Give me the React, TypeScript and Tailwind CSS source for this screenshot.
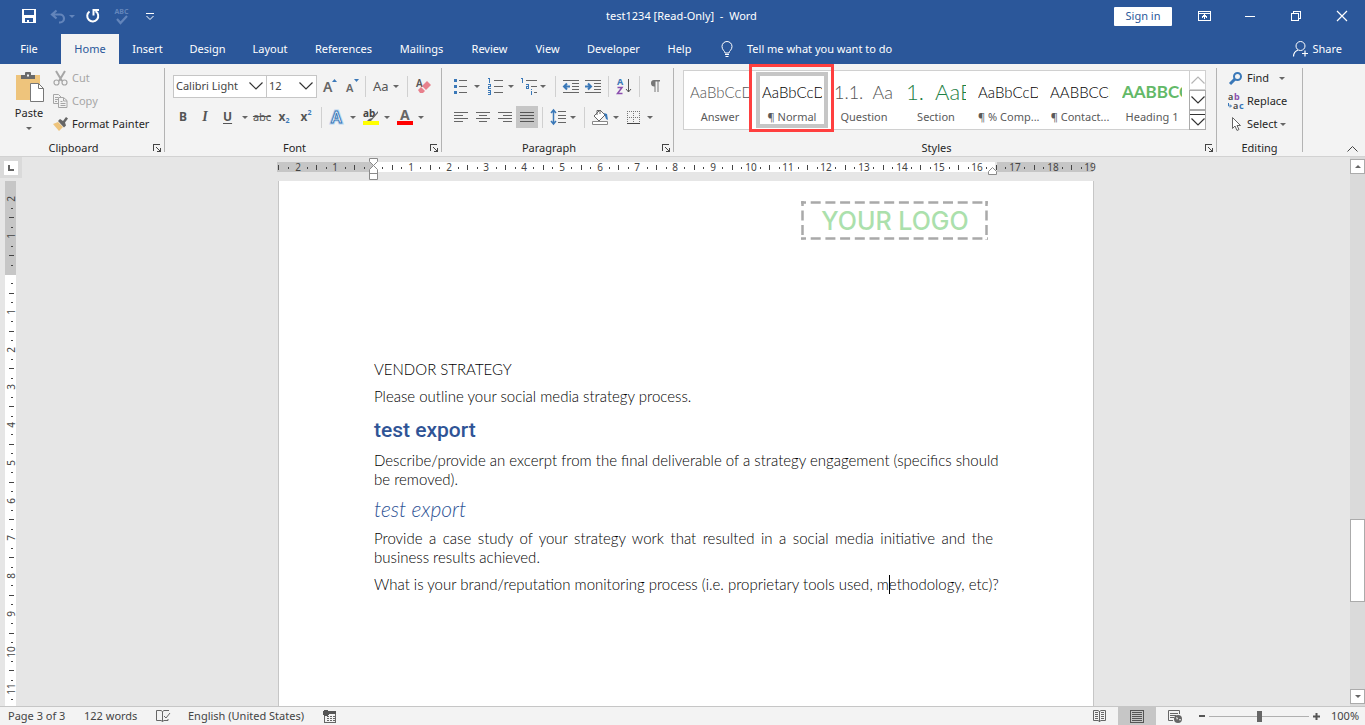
import React from 'react';

const TABS = [
    { label: 'File', width: 'w-[58px] mr-[3px]' },
    { label: 'Home', width: 'w-[58px]' },
    { label: 'Insert', width: 'w-[57px]' },
    { label: 'Design', width: 'w-[63px]' },
    { label: 'Layout', width: 'w-[62px]' },
    { label: 'References', width: 'w-[85px]' },
    { label: 'Mailings', width: 'w-[71px]' },
    { label: 'Review', width: 'w-[65px]' },
    { label: 'View', width: 'w-[51px]' },
    { label: 'Developer', width: 'w-[81px]' },
    { label: 'Help', width: 'w-[51px]' },
];

const STYLES = [
    { name: 'Answer', sample: 'AaBbCcD', look: 'font-light text-[15px] text-[#555]' },
    { name: '¶ Normal', sample: 'AaBbCcD', look: 'font-light text-[15px] text-black' },
    { name: 'Question', sample: '1.1.  Aa', look: 'font-light text-[18px] text-[#555]' },
    { name: 'Section', sample: '1.  AaB', look: 'font-light text-[22px] text-[#1d8044]' },
    { name: '¶ % Comp...', sample: 'AaBbCcD', look: 'font-light text-[15px] text-black' },
    { name: '¶ Contact...', sample: 'AABBCCD', look: 'font-light text-[15px] text-black' },
    { name: 'Heading 1', sample: 'AABBCC', look: 'font-bold text-[17px] text-[#63b968]' },
];

// one centimetre on the rulers, in pixels
const CM = 37.75;

interface IconProps {
    w: number;
    h: number;
    children: React.ReactNode;
    crisp?: boolean;
}

const Icon: React.FC<IconProps> = ({ w, h, children, crisp }) => (
    <svg
        width={w}
        height={h}
        viewBox={`0 0 ${w} ${h}`}
        fill="none"
        className="shrink-0 overflow-visible"
        shapeRendering={crisp ? 'crispEdges' : 'auto'}
        aria-hidden="true"
    >
        {children}
    </svg>
);

const Arrow: React.FC<{ color?: string }> = ({ color = '#666' }) => (
    <Icon w={6} h={3}>
        <path d="M0 0h6L3 3z" fill={color} />
    </Icon>
);

const Chevron: React.FC<{ color?: string }> = ({ color = '#333' }) => (
    <Icon w={14} h={8}>
        <path d="M.5.5 7 7l6.5-6.5" stroke={color} strokeWidth="1.2" />
    </Icon>
);

interface ToolProps {
    label: string;
    className: string;
    arrow?: boolean;
    children: React.ReactNode;
}

const Tool: React.FC<ToolProps> = ({ label, className, arrow, children }) => (
    <button
        aria-label={label}
        className={`flex h-[22px] shrink-0 items-center text-[#555] hover:bg-[#d5d5d5] ${arrow ? 'justify-between' : 'justify-center'} ${className}`}
    >
        {children}
        {arrow && <Arrow />}
    </button>
);

const Sep: React.FC<{ className: string }> = ({ className }) => (
    <div className={`h-[21px] w-px shrink-0 bg-[#d0d0d0] ${className}`} />
);

interface GroupProps {
    title: string;
    className: string;
    launcher?: boolean;
    children: React.ReactNode;
}

const Group: React.FC<GroupProps> = ({ title, className, launcher, children }) => (
    <section aria-label={title} className={`my-1 flex h-[84px] flex-col border-r border-[#b3b3b3] ${className}`}>
        <div className="min-h-0 flex-1">{children}</div>
        <div className="-mb-1 flex h-4 items-center">
            <span className={`flex-1 text-center text-[#262626] ${launcher ? 'pr-[6px]' : ''}`}>{title}</span>
            {launcher && (
                <button aria-label={`${title} settings`} className="mr-[3px] w-2">
                    <Icon w={8} h={8} crisp>
                        <path d="M.5 7V.5H7M3 3l4 4M7.5 3.500v4h-4" stroke="#444" />
                    </Icon>
                </button>
            )}
        </div>
    </section>
);

const TitleBar = () => (
    <header className="flex h-8 shrink-0 items-center bg-[#2b579a] text-white">
        <div className="flex flex-1 items-center pl-[22px]">
            <button aria-label="Save" className="mr-[15px]">
                <Icon w={14} h={14} crisp>
                    <path d="M0 0h14v14H0zM2 1v5h10V1zM3 9v4h2v-2h2v2h4V9z" fill="#fff" fillRule="evenodd" />
                </Icon>
            </button>
            <button aria-label="Undo" className="mr-[11px] flex items-center gap-[4px]">
                <Icon w={14} h={13}>
                    <path d="M5.500.5 1 4.500l4.500 4M1.500 4.500H9a4 4 0 0 1 0 8H8" stroke="#6385bb" strokeWidth="2.200" />
                </Icon>
                <Arrow color="#6385bb" />
            </button>
            <button aria-label="Repeat" className="mr-[15px]">
                <Icon w={13} h={14}>
                    <path d="M9.500 2.200A5.500 5.500 0 1 1 3.500 2.500" stroke="#fff" strokeWidth="2" />
                    <path d="M7.500 6.500V1H13" stroke="#fff" strokeWidth="2" />
                </Icon>
            </button>
            <button aria-label="Spelling" className="mr-[17px] flex w-[15px] flex-col items-center text-[7px] leading-[7px] font-bold text-[#6385bb]">
                ABC
                <Icon w={12} h={9}>
                    <path d="m1 4 3.500 4L11 1" stroke="#6385bb" strokeWidth="2.200" />
                </Icon>
            </button>
            <button aria-label="Customize toolbar">
                <Icon w={8} h={7}>
                    <path d="M0 .5h8M.5 3 4 6.500 7.500 3" stroke="#fff" />
                </Icon>
            </button>
        </div>
        <h1 className="mr-6 whitespace-pre">test1234 [Read-Only]  -  Word</h1>
        <div className="flex flex-1 items-center justify-end">
            <button className="mr-[9px] h-[19px] w-[58px] rounded-[1px] bg-white text-[#2b579a]">Sign in</button>
            <button aria-label="Ribbon display options" className="flex w-[46px] justify-center">
                <Icon w={13} h={10} crisp>
                    <path d="M.5.5h12v9H.5zM0 2.500h13M6.500 8V4M4 6.500 6.500 4 9 6.500" stroke="#fff" />
                </Icon>
            </button>
            <button aria-label="Minimize" className="flex w-[46px] justify-center">
                <Icon w={10} h={1} crisp>
                    <path d="M0 .5h10" stroke="#fff" />
                </Icon>
            </button>
            <button aria-label="Restore" className="flex w-[46px] justify-center">
                <Icon w={10} h={10} crisp>
                    <path d="M.5 2.500h7v7h-7zM2.500 2V.5h7v7H8" stroke="#fff" />
                </Icon>
            </button>
            <button aria-label="Close" className="flex w-[46px] justify-center">
                <Icon w={10} h={10}>
                    <path d="m0 0 10 10M10 0 0 10" stroke="#fff" strokeWidth="1.200" />
                </Icon>
            </button>
        </div>
    </header>
);

const TabBar = () => (
    <nav className="flex h-8 shrink-0 items-end bg-[#2b579a] text-white">
        {TABS.map(t => (
            <button
                key={t.label}
                className={`h-[30px] shrink-0 ${t.width} ${t.label === 'Home' ? 'bg-[#f3f3f3] text-[#2b579a]' : ''}`}
            >
                {t.label}
            </button>
        ))}
        <button className="ml-4 flex h-[30px] items-center gap-[14px] whitespace-nowrap">
            <Icon w={12} h={16}>
                <path d="M4 12c0-2-3-3-3-6.500a5 5 0 0 1 10 0C11 9 8 10 8 12zM4 13.500h4M4.500 15.500h3" stroke="#fff" />
            </Icon>
            Tell me what you want to do
        </button>
        <button className="mr-[23px] ml-auto flex h-[30px] items-center gap-1">
            <Icon w={15} h={16}>
                <circle cx="7.500" cy="5" r="4.500" stroke="#fff" />
                <path d="M.5 15.500c0-4 2-5.500 4.500-6.500M9 12.500h6M12 9.500v6" stroke="#fff" strokeWidth="1.200" />
            </Icon>
            Share
        </button>
    </nav>
);

const ClipboardGroup = () => (
    <Group title="Clipboard" className="w-[165px]" launcher>
        <div className="flex">
            <button className="ml-[9px] flex w-10 flex-col items-center pt-1 text-[#262626]">
                <span className="mr-[2px] ml-[2px]">
                    <Icon w={29} h={30}>
                        <path d="M1 3h24v25H1z" fill="#eec47c" />
                        <path d="M6 7V3h4V1q0-1 1-1h4q1 0 1 1v2h4v4z" fill="#6a6a6a" />
                        <path d="M12 2.500h2v2h-2z" fill="#f3f3f3" />
                        <path d="M15.500 11.500h8l5 5v13h-13z" fill="#fff" stroke="#777" />
                        <path d="M23.500 11.500v5h5" stroke="#777" />
                    </Icon>
                </span>
                <span className="mt-[3px] mb-[6px]">Paste</span>
                <Arrow />
            </button>
            <div className="ml-1 flex flex-col">
                <button className="flex h-[23px] items-center gap-1 pb-[3px] text-[#a6a6a6]">
                    <Icon w={15} h={15}>
                        <path d="m3 0 6 10M12 0 6 10" stroke="#a6a6a6" strokeWidth="2" />
                        <circle cx="3.500" cy="11.500" r="2.500" stroke="#a6a6a6" strokeWidth="1.200" />
                        <circle cx="11.500" cy="11.500" r="2.500" stroke="#a6a6a6" strokeWidth="1.200" />
                    </Icon>
                    Cut
                </button>
                <button className="flex h-[23px] items-center gap-1 pb-[3px] text-[#a6a6a6]">
                    <Icon w={15} h={14}>
                        <path d="M5 9.500H.5v-9h5L8 3M2 3.500h3M2 5.500h3M2 7.500h2" stroke="#a6a6a6" />
                        <path d="M5.500 3.500h5l3.500 3v7H5.500zM10.500 4v3h3.500M7.500 7.500h2M7.500 9.500h5M7.500 11.500h5" stroke="#a6a6a6" />
                    </Icon>
                    Copy
                </button>
                <button className="flex h-[23px] items-center gap-1 pb-[3px] whitespace-nowrap text-[#262626]">
                    <Icon w={15} h={14}>
                        <path d="m0 7 5-2 5 5-4 4z" fill="#eec47c" />
                        <path d="m5 4 2-2 3 2 3-4 2 1.500-3 4 1 3-2 2z" fill="#666" />
                    </Icon>
                    Format Painter
                </button>
            </div>
        </div>
    </Group>
);

const FontGroup = () => (
    <Group title="Font" className="w-[277px]" launcher>
        <div className="flex h-9 items-center pl-2">
            <label className="relative flex h-[23px] w-[94px] items-center">
                <select aria-label="Font" className="h-full w-full appearance-none border border-[#c6c6c6] bg-white pl-[2px] text-[#444]">
                    <option>Calibri Light</option>
                </select>
                <span className="pointer-events-none absolute right-1"><Chevron /></span>
            </label>
            <label className="relative -ml-px flex h-[23px] w-[51px] items-center">
                <select aria-label="Font size" className="h-full w-full appearance-none border border-[#c6c6c6] bg-white pl-[2px] text-[#444]">
                    <option>12</option>
                </select>
                <span className="pointer-events-none absolute right-1"><Chevron /></span>
            </label>
            <Tool label="Grow font" className="w-6">
                <Icon w={13} h={14}>
                    <text x="0" y="13" fontSize="14" fontWeight="600" fill="#666">A</text>
                    <path d="M9 3h5l-2.500-3z" fill="#3a78b8" />
                </Icon>
            </Tool>
            <Tool label="Shrink font" className="w-[22px]">
                <Icon w={12} h={14}>
                    <text x="0" y="13" fontSize="11" fontWeight="600" fill="#666">A</text>
                    <path d="M8 0h5l-2.500 3z" fill="#3a78b8" />
                </Icon>
            </Tool>
            <Sep className="mx-[2px]" />
            <Tool label="Change case" arrow className="w-[34px] pr-[3px] pl-[5px] text-[13px]">Aa</Tool>
            <Sep className="mr-[2px] ml-[5px]" />
            <Tool label="Clear formatting" className="w-[26px]">
                <Icon w={15} h={16}>
                    <text x="0" y="9" fontSize="10" fontWeight="600" fill="#555">A</text>
                    <path d="m6 8 5-5 4 4-5 5z" fill="#e8808c" />
                    <path d="m5 9 4 4-2 2H4l-2-3z" fill="#e8808c" />
                </Icon>
            </Tool>
        </div>
        <div className="flex h-[26px] items-center pl-[7px]">
            <Tool label="Bold" className="w-[22px] text-[12px] font-bold">B</Tool>
            <Tool label="Italic" className="w-[22px] font-['Liberation_Serif',serif] text-[14px] font-bold italic">I</Tool>
            <Tool label="Underline" arrow className="w-[34px] pr-[2px] pl-[7px] text-[12px]">
                <span className="font-bold underline underline-offset-2">U</span>
            </Tool>
            <Tool label="Strikethrough" className="w-[24px] line-through">abc</Tool>
            <Tool label="Subscript" className="w-5 text-[12px]">
                <span className="font-bold">x</span>
                <span className="mt-2 text-[7px] font-bold text-[#3a78b8]">2</span>
            </Tool>
            <Tool label="Superscript" className="w-6 text-[12px]">
                <span className="font-bold">x</span>
                <span className="mb-2 text-[7px] font-bold text-[#3a78b8]">2</span>
            </Tool>
            <Sep className="mr-[9px] ml-[3px]" />
            <Tool label="Text effects" arrow className="w-[25px]">
                <Icon w={13} h={14}>
                    <text x="0" y="13" fontSize="16" fontWeight="600" fill="#fff" stroke="#bcd6f0" strokeWidth="3">A</text>
                    <text x="0" y="13" fontSize="16" fontWeight="600" fill="#fff" stroke="#3a78b8">A</text>
                </Icon>
            </Tool>
            <Tool label="Highlight color" arrow className="ml-[7px] w-[27px]">
                <Icon w={16} h={17}>
                    <path d="M0 12h16v4H0z" fill="#ff0" />
                    <text x="0" y="8" fontSize="10" fontWeight="700" fill="#444">ab</text>
                    <path d="m15 2-6 7-3 1-2 2 4 0 7-8z" fill="#666" />
                </Icon>
            </Tool>
            <Tool label="Font color" arrow className="ml-[7px] w-[27px]">
                <Icon w={16} h={17}>
                    <text x="3" y="11" fontSize="14" fontWeight="700" fill="#666">A</text>
                    <path d="M0 12h16v4H0z" fill="red" />
                </Icon>
            </Tool>
        </div>
    </Group>
);

const ParagraphGroup = () => (
    <Group title="Paragraph" className="w-[232px]" launcher>
        <div className="flex h-9 items-center pl-3">
            <Tool label="Bullets" arrow className="w-[26px]">
                <Icon w={13} h={14} crisp>
                    <path d="M0 0h3v3H0zM0 6h3v3H0zM0 12h3v3H0z" fill="#3a78b8" />
                    <path d="M5 1.500h8M5 7.500h8M5 13.500h8" stroke="#666" />
                </Icon>
            </Tool>
            <Tool label="Numbering" arrow className="ml-[8px] w-[26px]">
                <Icon w={14} h={16} crisp>
                    <path d="M0 .5h1.500V5M0 6.500h2.500v2H.5v2H3M0 12.500h2.500v4H0M0 14.500h2" stroke="#3a78b8" />
                    <path d="M6 2.500h9M6 8.500h9M6 14.500h9" stroke="#666" />
                </Icon>
            </Tool>
            <Tool label="Multilevel list" arrow className="ml-[7px] w-[25px]">
                <Icon w={17} h={16} crisp>
                    <path d="M0 .5h1.500V5M5 6.500h2.500v4h-2v-2h2M10.500 11v1M10.500 13v4" stroke="#3a78b8" />
                    <path d="M5 2.500h11M10 8.500h6M13 14.500h3" stroke="#666" />
                </Icon>
            </Tool>
            <Sep className="mr-[4px] ml-[9px]" />
            <Tool label="Decrease indent" className="w-[22px]">
                <Icon w={16} h={13}>
                    <path d="M0 .5h16M9 3.500h7M9 6.500h7M9 9.500h7M0 12.500h16" stroke="#666" />
                    <path d="M7 6.500H1M4 3.500l-3 3 3 3" stroke="#3a78b8" strokeWidth="2" />
                </Icon>
            </Tool>
            <Tool label="Increase indent" className="w-[22px]">
                <Icon w={16} h={13}>
                    <path d="M0 .5h16M9 3.500h7M9 6.500h7M9 9.500h7M0 12.500h16" stroke="#666" />
                    <path d="M0 6.500h6M3 3.500l3 3-3 3" stroke="#3a78b8" strokeWidth="2" />
                </Icon>
            </Tool>
            <Sep className="mr-[3px] ml-1" />
            <Tool label="Sort" className="w-6">
                <Icon w={14} h={16}>
                    <text x="0" y="7" fontSize="9" fontWeight="700" fill="#3a78b8">A</text>
                    <path d="M.5 9.500h4.500L.5 15.500h5" stroke="#8b4fae" strokeWidth="1.500" />
                    <path d="M11.500 1v13M9 11l2.500 3 2.500-3" stroke="#555" />
                </Icon>
            </Tool>
            <Sep className="mr-[3px] ml-[3px]" />
            <Tool label="Show formatting marks" className="w-[24px]">
                <Icon w={10} h={12}>
                    <path d="M4 0h6v1.500H8.500V12h-1V1.500h-2V12h-1V6.500A3.250 3.250 0 0 1 4 0z" fill="#777" />
                </Icon>
            </Tool>
        </div>
        <div className="flex h-[26px] items-center pl-2">
            <Tool label="Align left" className="w-[22px]">
                <Icon w={14} h={11} crisp><path d="M0 .5h14M0 3.500h9M0 6.500h14M0 9.500h9" stroke="#666" /></Icon>
            </Tool>
            <Tool label="Center" className="w-[22px]">
                <Icon w={14} h={11} crisp><path d="M0 .5h14M3 3.500h8M0 6.500h14M3 9.500h8" stroke="#666" /></Icon>
            </Tool>
            <Tool label="Align right" className="w-[22px]">
                <Icon w={14} h={11} crisp><path d="M0 .5h14M5 3.500h9M0 6.500h14M5 9.500h9" stroke="#666" /></Icon>
            </Tool>
            <Tool label="Justify" className="w-[22px] bg-[#c6c6c6]">
                <Icon w={14} h={11} crisp><path d="M0 .5h14M0 3.500h14M0 6.500h14M0 9.500h14" stroke="#555" /></Icon>
            </Tool>
            <Sep className="mr-2 ml-1" />
            <Tool label="Line spacing" arrow className="w-[25px]">
                <Icon w={15} h={16}>
                    <path d="M2.500 1v14M0 4l2.500-3L5 4M0 12l2.500 3L5 12" stroke="#3a78b8" strokeWidth="1.500" />
                    <path d="M7 2.500h8M7 6.500h8M7 9.500h8M7 13.500h8" stroke="#666" />
                </Icon>
            </Tool>
            <Sep className="mr-[7px] ml-[8px]" />
            <Tool label="Shading" arrow className="w-[27px]">
                <Icon w={16} h={16}>
                    <path d="m2 7 6-6 5 5-6 6zM5 6V1.500h3V5" stroke="#666" fill="#fff" />
                    <path d="m12 4 3 1 1 6-2-1-1-3z" fill="#3a78b8" />
                    <path d="M.5 12.500h15v3H.5z" fill="#fff" stroke="#888" />
                </Icon>
            </Tool>
            <Tool label="Borders" arrow className="ml-2 w-[26px]">
                <Icon w={13} h={13}>
                    <path d="M.5 0v12M12.500 0v12M6.500 0v12M0 .5h13M0 6.500h13" stroke="#777" strokeDasharray="1 1" />
                    <path d="M0 12.500h13" stroke="#444" />
                </Icon>
            </Tool>
        </div>
    </Group>
);

const StylesGroup = () => (
    <Group title="Styles" className="w-[543px]" launcher>
        <div className="mt-[2px] ml-[9px] flex h-[60px] w-[523px] border border-[#d0d0d0] bg-white">
            {STYLES.map(s => (
                <button
                    key={s.name}
                    className={`relative my-px flex w-[72px] shrink-0 flex-col ${s.name === '¶ Normal' ? 'border-4 border-[#c6c6c6] px-[2px]' : 'px-[6px] py-1'}`}
                >
                    <span className={`h-8 w-full overflow-hidden text-left font-['Lato',sans-serif] leading-8 whitespace-pre ${s.look}`}>
                        {s.sample}
                    </span>
                    <span className="h-4 w-full text-center leading-[18px] whitespace-nowrap text-[#5a5a5a]">{s.name}</span>
                    {s.name === '¶ Normal' && (
                        <span className="pointer-events-none absolute -top-[12px] -right-[10px] -bottom-2 -left-[11px] border-[3px] border-[#ff3f3f]" />
                    )}
                </button>
            ))}
            <div className="-my-px -mr-px ml-auto flex w-[17px] flex-col">
                <button aria-label="Previous styles" className="flex flex-1 items-center justify-center border border-[#d0d0d0]">
                    <span className="rotate-180"><Chevron color="#b5b5b5" /></span>
                </button>
                <button aria-label="More styles" className="flex flex-1 items-center justify-center border border-[#ababab]">
                    <Chevron />
                </button>
                <button aria-label="All styles" className="flex flex-1 flex-col items-center justify-center gap-[3px] border border-[#ababab]">
                    <span className="h-px w-[15px] bg-[#333]" />
                    <Chevron />
                </button>
            </div>
        </div>
    </Group>
);

const EditingGroup = () => (
    <Group title="Editing" className="w-[86px] text-[#262626]">
        <div className="flex flex-col items-start pl-[11px]">
            <button className="flex h-[23px] items-center pb-[3px] pl-px">
                <Icon w={13} h={13}>
                    <circle cx="8.500" cy="4.500" r="3.500" stroke="#3a78b8" strokeWidth="2" />
                    <path d="m1 12 5-5" stroke="#3a78b8" strokeWidth="3" />
                </Icon>
                <span className="mr-[10px] ml-[5px]">Find</span>
                <Arrow />
            </button>
            <button className="flex h-[23px] items-center gap-[4px] pb-[3px]">
                <Icon w={15} h={15}>
                    <text x="0" y="6" fontSize="9" fontWeight="600" fill="#444">a</text>
                    <text x="6" y="6" fontSize="9" fontWeight="700" fill="#8b4fae">b</text>
                    <path d="M.5 9v3H3M2 10.500 3.500 12 2 13.500" stroke="#3a78b8" />
                    <text x="5" y="15" fontSize="9" fontWeight="600" fill="#444">a</text>
                    <text x="11" y="15" fontSize="9" fontWeight="700" fill="#3a78b8">c</text>
                </Icon>
                Replace
            </button>
            <button className="flex h-[23px] items-center pb-[3px] pl-1">
                <Icon w={9} h={14}>
                    <path d="M.5.5v11L3 9l2 4.500 2-1L5 8.500h3.500z" fill="#fff" stroke="#666" />
                </Icon>
                <span className="mr-[2px] ml-[6px]">Select</span>
                <Arrow />
            </button>
        </div>
    </Group>
);

const Ribbon = () => (
    <div className="flex h-[93px] shrink-0 border-b border-[#d2d2d2] bg-[#f3f3f3]">
        <ClipboardGroup />
        <FontGroup />
        <ParagraphGroup />
        <StylesGroup />
        <EditingGroup />
        <button aria-label="Collapse ribbon" className="mr-[7px] mb-1 ml-auto self-end">
            <Icon w={11} h={6}>
                <path d="M.5 5.500 5.500.5l5 5" stroke="#444" />
            </Icon>
        </button>
    </div>
);

interface MarksProps {
    from: number;
    to: number;
    vertical?: boolean;
}

// quarter dots, half ticks and centimetre numbers, counted from the margin
const RulerMarks: React.FC<MarksProps> = ({ from, to, vertical }) => {
    const marks: React.ReactNode[] = [];
    for (let q = from * 4; q <= to * 4; q++) {
        const at = Math.round((q * CM) / 4);
        if (q === 0) continue;
        if (q % 4 === 0) {
            marks.push(
                <text
                    key={q}
                    x={vertical ? 0 : at}
                    y={vertical ? 0 : 4}
                    transform={vertical ? `translate(4 ${at}) rotate(-90)` : undefined}
                    textAnchor="middle"
                    fontSize="10"
                    fill="#444"
                >
                    {Math.abs(q / 4)}
                </text>
            );
            continue;
        }
        const len = q % 2 === 0 ? 5 : 2;
        const start = len === 5 ? -2 : 0;
        marks.push(
            <rect
                key={q}
                x={vertical ? start : at}
                y={vertical ? at : start}
                width={vertical ? len : 1}
                height={vertical ? 1 : len}
                fill="#444"
            />
        );
    }
    return <>{marks}</>;
};

const HorizontalRuler = () => (
    <svg className="block h-6 w-[816px] overflow-visible" viewBox="0 0 816 24" aria-label="Horizontal ruler">
        <path d="M-1 5h96v10H-1zM719 5h96v10h-96z" fill="#c6c6c6" />
        <path d="M95 5h622v10H95z" fill="#fff" />
        <path d="M0 8h1v5H0z" fill="#444" />
        <g transform="translate(95 10)">
            <RulerMarks from={-2} to={19} />
            <rect x="-85" y="0" width="1" height="2" fill="#444" />
        </g>
        <path d="M91.500 2.500h8v3l-4 4 4 4v10h-8v-10l4-4-4-4zM91.500 17.500h8" transform="translate(0 -1)" fill="#fff" stroke="#8a8a8a" />
        <path d="M710.500 17.500v-3l4-4 4 4v3z" fill="#fff" stroke="#8a8a8a" />
    </svg>
);

const LeftRail = () => (
    <div className="flex w-[22px] shrink-0 flex-col overflow-hidden">
        <button aria-label="Tab stop" className="flex h-[21px] w-[22px] shrink-0 items-center justify-center bg-[#dadada]">
            <span className="flex size-[14px] items-center justify-center bg-white">
                <Icon w={6} h={6} crisp><path d="M1 0v5h5" stroke="#666" strokeWidth="2" /></Icon>
            </span>
        </button>
        <div className="mt-[3px] ml-[5px] min-h-0 w-[11px] flex-1 overflow-hidden bg-white">
            <svg className="block h-[525px] w-[11px]" viewBox="0 0 11 525" aria-label="Vertical ruler">
                <path d="M0 0h11v94H0z" fill="#c6c6c6" />
                <g transform="translate(6 93)">
                    <RulerMarks from={-2} to={11} vertical />
                    <rect x="0" y="425" width="2" height="1" fill="#444" />
                </g>
            </svg>
        </div>
    </div>
);

const Logo = () => (
    <svg className="ml-auto block h-[39px] w-[187px]" viewBox="0 0 187 39" aria-label="Your logo">
        <g stroke="#a9a9a9" strokeWidth="2.500">
            <path d="M0 1.500h187M0 37.500h187" strokeDasharray="10 4.700" strokeDashoffset="5" />
            <path d="M1.500 0v39M185.500 0v39" strokeDasharray="10 4.500" strokeDashoffset="5" fill="none" />
        </g>
        <text x="94" y="29" textAnchor="middle" fontSize="25" fontWeight="500" fill="#abe0ac" className="font-['Inter',sans-serif]">
            YOUR LOGO
        </text>
    </svg>
);

const Page = () => (
    <article className="min-h-0 flex-1 overflow-hidden border-x border-[#c6c6c6] bg-white pt-5 pr-[100px] pl-[95px] font-['Lato',sans-serif] text-[15px] leading-[19px] font-light text-black">
        <div className="pr-[5px]">
            <Logo />
        </div>
        <div className="mt-[120px] flex flex-col gap-2">
            <p>VENDOR STRATEGY</p>
            <p>Please outline your social media strategy process.</p>
            <h2 className="pt-1 font-['Roboto',sans-serif] text-[21px] leading-[25px] font-medium text-[#2f5496]">test export</h2>
            <p>
                <span className="block whitespace-nowrap">
                    Describe/provide an excerpt from the final deliverable of a strategy engagement (specifics should
                </span>
                be removed).
            </p>
            <h3 className="text-[21px] leading-[23px] italic text-[#2f5496]">test export</h3>
            <p className="pt-px text-justify">
                Provide a case study of your strategy work that resulted in a social media initiative and the business results achieved.
            </p>
            <p className="whitespace-nowrap">
                What is your brand/reputation monitoring process (i.e. proprietary tools used, m
                <span className="relative">
                    <span className="absolute top-0 left-0 h-[19px] w-px bg-black" />
                </span>
                ethodology, etc)?
            </p>
        </div>
    </article>
);

const ScrollBar = () => (
    <div className="flex w-[15px] shrink-0 flex-col bg-[#dadada] pt-[2px] pb-[2px]">
        <button aria-label="Scroll up" className="flex h-[15px] items-center justify-center border border-[#ababab] bg-white">
            <span className="rotate-180"><Arrow /></span>
        </button>
        <div className="grow-[345]" />
        <div className="h-[83px] border border-[#ababab] bg-white" />
        <div className="grow-[87]" />
        <button aria-label="Scroll down" className="flex h-[15px] items-center justify-center border border-[#ababab] bg-white">
            <Arrow />
        </button>
    </div>
);

const StatusBar = () => (
    <footer className="flex h-[19px] shrink-0 items-center border-t border-[#c6c6c6] bg-[#f3f3f3] text-[#444]">
        <button className="ml-2 w-[76px] text-left">Page 3 of 3</button>
        <button className="w-[72px] text-left">122 words</button>
        <button aria-label="Proofing" className="w-8">
            <Icon w={14} h={12}>
                <path d="M6.500 11.500 5 10.500H.5v-10H5l1.500 1 1.500-1h5M6.500 1.500v10L8 10.500h4V9M8 6l2 2 4-5" stroke="#666" />
            </Icon>
        </button>
        <button className="w-[135px] text-left">English (United States)</button>
        <button aria-label="Macro recording">
            <Icon w={13} h={13} crisp>
                <path d="M1.500 4v8.500h11V2.500H5" stroke="#666" />
                <path d="M5 1h8v3H5z" fill="#555" />
                <circle cx="3" cy="3" r="3" fill="#555" />
                <path d="M4 6.500h8M4 8.500h8M4 10.500h8" stroke="#666" strokeDasharray="2 1" />
            </Icon>
        </button>
        <div className="ml-auto flex h-full items-center">
            <button aria-label="Read mode" className="flex h-full w-[38px] items-center justify-center">
                <Icon w={13} h={12}>
                    <path d="M6.500 1.500 5 .5H.5v10H5l1.500 1 1.500-1h4.500V.5H8zM6.500 1v11M2 2.500h3M2 4.500h3M2 6.500h3M2 8.500h3M8 2.500h3M8 4.500h3M8 6.500h3M8 8.500h3" stroke="#666" />
                </Icon>
            </button>
            <button aria-label="Print layout" className="flex h-full w-[38px] items-center justify-center bg-[#c6c6c6]">
                <Icon w={14} h={13} crisp>
                    <path d="M.5.5h13v12H.5zM2 2.500h10M2 4.500h10M2 6.500h10M2 8.500h10M2 10.500h10" stroke="#555" />
                </Icon>
            </button>
            <button aria-label="Web layout" className="flex h-full w-[38px] items-center justify-center">
                <Icon w={14} h={13}>
                    <path d="M5 10.500H.5V.5h11V4M2 3.500h8M2 5.500h6M2 7.500h4" stroke="#666" />
                    <circle cx="10" cy="9" r="4" fill="#666" />
                    <path d="m8 7 2 1-1 2zM11 9l2 0-1 2z" fill="#f3f3f3" />
                </Icon>
            </button>
            <button aria-label="Zoom out" className="mr-[4px] ml-[5px]">
                <Icon w={6} h={6} crisp><path d="M0 3h6" stroke="#555" strokeWidth="2" /></Icon>
            </button>
            <input
                type="range"
                aria-label="Zoom"
                defaultValue={50}
                className="h-3 w-[100px] appearance-none bg-[linear-gradient(#b0b0b0,#b0b0b0)] bg-[length:100%_1px] bg-center bg-no-repeat [&::-webkit-slider-thumb]:h-[11px] [&::-webkit-slider-thumb]:w-[5px] [&::-webkit-slider-thumb]:appearance-none [&::-webkit-slider-thumb]:bg-[#666]"
            />
            <button aria-label="Zoom in" className="mr-[11px] ml-1">
                <Icon w={7} h={7}><path d="M0 3.500h7M3.500 0v7" stroke="#555" strokeWidth="2" /></Icon>
            </button>
            <button className="w-[34px] text-left">100%</button>
        </div>
    </footer>
);

export default function App() {
    return (
        <div className="flex h-screen flex-col overflow-hidden bg-[#e6e6e6] font-['Noto_Sans','Segoe_UI',sans-serif] text-[11px] leading-4">
            <TitleBar />
            <TabBar />
            <Ribbon />
            <main className="flex min-h-0 flex-1">
                <LeftRail />
                <div className="flex min-w-0 flex-1 justify-center">
                    <div className="flex w-[816px] shrink-0 flex-col">
                        <HorizontalRuler />
                        <Page />
                    </div>
                </div>
                <ScrollBar />
            </main>
            <StatusBar />
        </div>
    );
}
